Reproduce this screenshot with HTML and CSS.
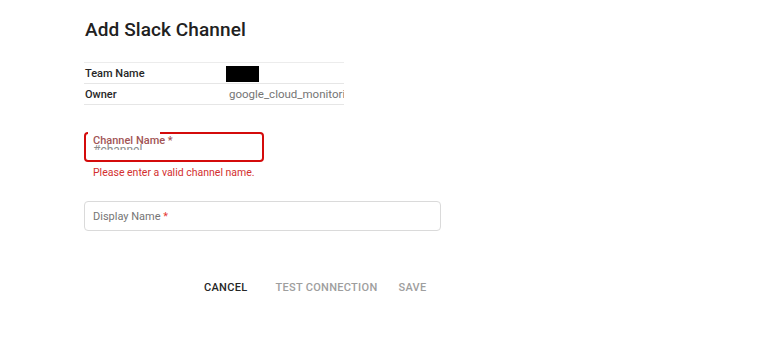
FILE: index.html
```html
<!DOCTYPE html>
<html>
<head>
<meta charset="utf-8">
<link rel="stylesheet" href="styles.css">
</head>
<body>
<div class="dialog">
  <h1 class="title">Add Slack Channel</h1>
  <div class="info">
    <div class="row"><span class="key">Team Name</span><span class="val"><span class="redact"></span></span></div>
    <div class="row"><span class="key">Owner</span><span class="val text">google_cloud_monitoring</span></div>
  </div>
  <div class="field error">
    <div class="notch"></div>
    <span class="ph">#channel</span>
    <span class="flabel">Channel Name *</span>
  </div>
  <div class="errmsg">Please enter a valid channel name.</div>
  <div class="field plain">
    <span class="ph2">Display Name <span class="ast">*</span></span>
  </div>
  <div class="actions">
    <button class="btn primary">CANCEL</button>
    <button class="btn">TEST CONNECTION</button>
    <button class="btn">SAVE</button>
  </div>
</div>
</body>
</html>
```
FILE: styles.css
```css
html, body { margin: 0; padding: 0; background: #fff; }
body { font-family: Roboto, "Liberation Sans", sans-serif; color: #202124; }
.dialog { padding: 18px 0 0 85px; width: 356px; }
.title { margin: 0; font-size: 19px; font-weight: 500; line-height: 23px; color: #212121; letter-spacing: 0.1px; }
.info { margin-top: 21px; width: 260px; margin-left: -1px; border-top: 1px solid #ececec; }
.row { display: flex; height: 20px; align-items: center; border-bottom: 1px solid #e6e6e6; font-size: 11px; }
.key { width: 141px; color: #262626; font-weight: 500; padding-left: 1px; }
.val { flex: 1; overflow: hidden; white-space: nowrap; }
.val.text { color: #757575; padding-left: 3px; font-size: 11.5px; }
.redact { display: block; width: 33px; height: 16px; background: #000; margin-top: 1px; }
.field { position: relative; box-sizing: border-box; margin-left: -1px; }
.field.error { width: 180px; height: 30px; margin-top: 27px; border: 2px solid #d40b0b; border-radius: 4px; }
.notch { position: absolute; left: 2px; top: -2px; width: 72px; height: 2px; background: #fff; }
.flabel { position: absolute; left: 7px; top: 1px; font-size: 11px; font-weight: 500; color: #a25555; line-height: 12px; }
.ph { position: absolute; left: 7px; top: 9px; font-size: 12px; color: #8a8a8a; line-height: 14px; height: 7px; overflow: hidden; }
.errmsg { font-size: 10.5px; color: #d32f2f; margin: 5px 0 0 8px; line-height: 12px; }
.field.plain { width: 357px; height: 30px; margin-top: 22px; border: 1px solid #dadada; border-radius: 4px; display: flex; align-items: center; padding-left: 8px; }
.ph2 { font-size: 11px; color: #757575; }
.ast { color: #e53935; }
.actions { display: flex; margin: 50px 0 0 119px; }
.btn { background: none; border: none; padding: 0; margin: 0; font-family: Roboto, "Liberation Sans", sans-serif; font-size: 11px; font-weight: 500; color: #9e9e9e; letter-spacing: 0.3px; cursor: pointer; }
.btn.primary { color: #262626; margin-right: 28px; }
.btn + .btn { margin-right: 21px; }
.btn:last-child { margin-right: 0; }
```
